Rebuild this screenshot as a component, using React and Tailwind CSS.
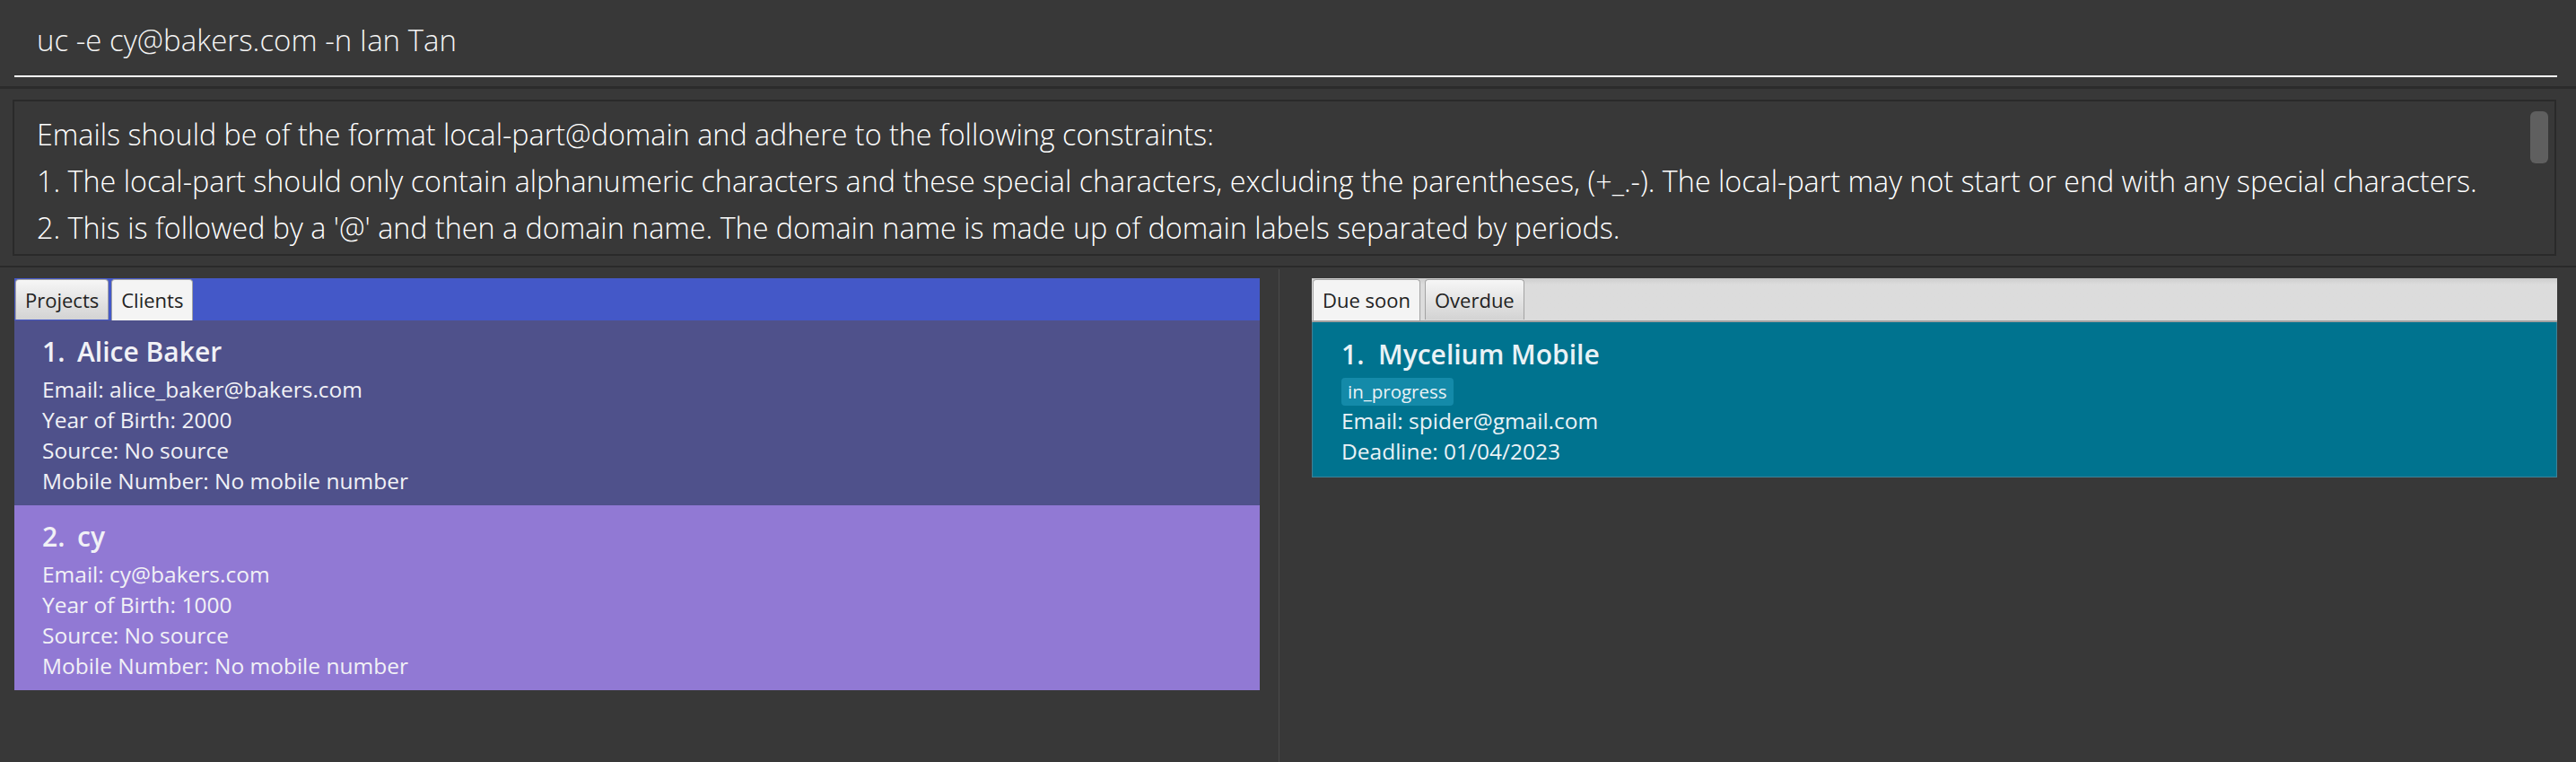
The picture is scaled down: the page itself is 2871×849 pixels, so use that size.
import React from 'react';

const clients = [
    { id: 1, name: 'Alice Baker', email: 'alice_baker@bakers.com', yob: '2000', bg: 'bg-[#4f518b]' },
    { id: 2, name: 'cy', email: 'cy@bakers.com', yob: '1000', bg: 'bg-[#9179d4]' },
];

const errorLines = [
    'Emails should be of the format local-part@domain and adhere to the following constraints:',
    '1. The local-part should only contain alphanumeric characters and these special characters, excluding the parentheses, (+_.-). The local-part may not start or end with any special characters.',
    "2. This is followed by a '@' and then a domain name. The domain name is made up of domain labels separated by periods.",
];

const Tab = ({ label, active }) => (
    <div
        className={`flex items-center px-[10px] border border-b-0 border-[#a3a3a3] rounded-t-[4px] text-[22px] text-[#222] ${active
            ? 'h-[46px] bg-[#f4f4f4]'
            : 'h-[45px] mb-[1px] bg-linear-to-b from-[#f6f6f6] to-[#d3d3d3]'
            }`}
    >
        {label}
    </div>
);

const ClientCard = ({ client }) => (
    <div className={`${client.bg} pl-[31px] pt-[14px] pb-[10px] text-[#f1f1f6]`}>
        <div className="flex h-[40px] items-center text-[30px] font-semibold">
            <span className="w-[39px]">{client.id}.</span>
            <span>{client.name}</span>
        </div>
        <div className="mt-[6px] text-[24.5px] leading-[34px]">
            <div>Email: {client.email}</div>
            <div>Year of Birth: {client.yob}</div>
            <div>Source: No source</div>
            <div>Mobile Number: No mobile number</div>
        </div>
    </div>
);

export default function App() {
    return (
        <div className="w-full h-[849px] flex flex-col bg-[#383838] font-['Open_Sans',sans-serif] overflow-hidden">
            {/* command box */}
            <div className="h-[96px] pl-[16px] pr-[21px]">
                <div className="pt-[23px] pb-[17px] pl-[25px] border-b-2 border-white text-[33px] leading-[44px] font-light text-[#f4f4f4]">
                    uc -e cy@bakers.com -n Ian Tan
                </div>
            </div>
            <div className="h-[3px] bg-[#2b2b2b]" />

            {/* result display */}
            <div className="h-[197px] pt-[12px] pl-[14px] pr-[22px]">
                <div className="h-[174px] flex border-2 border-[#2a2a2a] overflow-hidden">
                    <div className="flex-1 pt-[10px] pl-[25px] text-[32.3px] leading-[52px] font-light text-white whitespace-nowrap">
                        {errorLines.map((line) => (
                            <div key={line}>{line}</div>
                        ))}
                    </div>
                    <div className="w-[20px] mr-[7px] mt-[11px] h-[58px] rounded-[6px] bg-[#5f5f5f]" />
                </div>
            </div>
            <div className="h-[2px] bg-[#2a2a2a]" />

            {/* lists */}
            <div className="flex-1 flex">
                <div className="w-[1425px] pt-[12px] pl-[16px] pr-[21px]">
                    <div className="h-[47px] flex items-end gap-[3px] pl-[1px] bg-[#4458c8]">
                        <Tab label="Projects" />
                        <Tab label="Clients" active />
                    </div>
                    {clients.map((c) => (
                        <ClientCard key={c.id} client={c} />
                    ))}
                </div>

                <div className="w-px mt-[2px] bg-[#4b4b4b]" />

                <div className="flex-1 pt-[12px] pl-[36px] pr-[21px]">
                    <div className="h-[49px] flex items-end gap-[5px] pl-[1px] border-b-2 border-[#a0a0a0] bg-linear-to-b from-[#cdcdcd] to-[#dcdcdc] to-[15%]">
                        <Tab label="Due soon" active />
                        <Tab label="Overdue" />
                    </div>
                    <div className="bg-[#00738f] border border-t-0 border-[#3f8196] pl-[32px] pt-[15px] pb-[11px] text-[#eaf2f6]">
                        <div className="flex h-[40px] items-center text-[30px] font-semibold">
                            <span className="w-[41px]">1.</span>
                            <span>Mycelium Mobile</span>
                        </div>
                        <div className="mt-[7px] flex">
                            <span className="h-[31px] flex items-center px-[7px] rounded-[4px] bg-[#148aa9] text-[20.5px]">
                                in_progress
                            </span>
                        </div>
                        <div className="text-[24.5px] leading-[34px]">
                            <div>Email: spider@gmail.com</div>
                            <div>Deadline: 01/04/2023</div>
                        </div>
                    </div>
                </div>
            </div>
        </div>
    );
}
